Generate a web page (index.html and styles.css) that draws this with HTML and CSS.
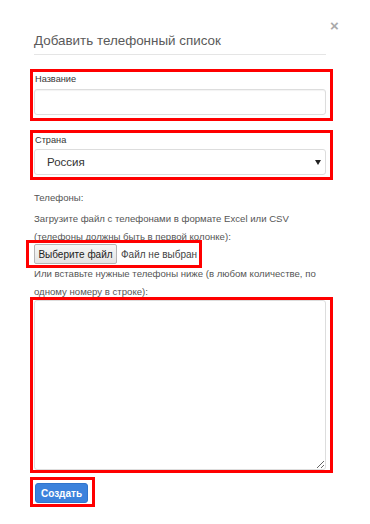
FILE: index.html
```html
<!DOCTYPE html>
<html lang="ru">
<head>
<meta charset="utf-8">
<title>Добавить телефонный список</title>
<link rel="stylesheet" href="styles.css">
</head>
<body>
<div class="modal">
  <button class="close" type="button">×</button>
  <div class="modal-header">
    <h4 class="title">Добавить телефонный список</h4>
  </div>
  <form class="modal-body">
    <div class="mark mark-wide">
      <label class="label">Название</label>
      <input class="control" type="text">
    </div>
    <div class="mark mark-wide mark-country">
      <label class="label">Страна</label>
      <div class="select">
        <span class="select-value">Россия</span>
        <svg class="select-arrow" width="6" height="5" viewBox="0 0 6 5"><path d="M0 0H6L3 5Z" fill="#222"/></svg>
      </div>
    </div>
    <p class="text text-phones">Телефоны:</p>
    <p class="text text-upload">Загрузите файл с телефонами в формате Excel или CSV (телефоны должны быть в первой колонке):</p>
    <div class="mark mark-file">
      <span class="file-btn">Выберите файл</span>
      <span class="file-name">Файл не выбран</span>
    </div>
    <p class="text text-paste">Или вставьте нужные телефоны ниже (в любом количестве, по одному номеру в строке):</p>
    <div class="mark mark-wide mark-area">
      <textarea class="area"></textarea>
    </div>
    <div class="mark mark-submit">
      <button class="submit" type="button">Создать</button>
    </div>
  </form>
</div>
</body>
</html>
```
FILE: styles.css
```css
* { box-sizing: border-box; }
html, body { margin: 0; padding: 0; background: #fff; }
body { font-family: "Liberation Sans", Arial, sans-serif; color: #555; }

.modal { position: relative; width: 370px; height: 524px; padding: 0 44px 0 34px; }

.close {
  position: absolute; left: 330px; top: 17px;
  border: 0; background: none; padding: 0; margin: 0;
  font-family: "Liberation Sans", Arial, sans-serif;
  font-size: 15px; font-weight: bold; line-height: 18px; color: #aaa;
}

.modal-header { padding-top: 32px; padding-bottom: 4px; border-bottom: 1px solid #e5e5e5; }
.title { margin: 0; font-size: 13.4px; font-weight: normal; line-height: 18px; color: #5a5a5a; }

.modal-body { margin: 0; display: flex; flex-direction: column; align-items: flex-start; }

.mark { border: 3px solid #f00; }
.mark-wide { margin-left: -4px; width: 303px; padding: 0 0 3px 1px; margin-top: 14px; }
.mark-country { margin-top: 9px; padding-bottom: 2px; }

.label { display: block; font-size: 9.2px; line-height: 14px; color: #333; padding-left: 1px; }

.control {
  display: block; width: 292px; height: 26px; margin: 3px 0 0 0;
  border: 1px solid #ddd; border-radius: 3px; background: #fff;
  box-shadow: inset 0 1px 1px rgba(0,0,0,0.05);
  font-family: inherit;
}

.select {
  position: relative; display: flex; align-items: center;
  width: 292px; height: 26px; margin-top: 2px; padding-left: 12px;
  border: 1px solid #ddd; border-radius: 3px; background: #fff;
  font-size: 11.5px; color: #333;
}
.select-arrow { position: absolute; right: 4px; top: 10px; }

.text { margin: 0; font-size: 9.6px; line-height: 18px; color: #555; width: 292px; }
.text-phones { margin-top: 9px; }
.text-upload { margin-top: 3px; }

.mark-file {
  margin: -6px 0 0 -8px; width: 176px; height: 28px;
  display: flex; align-items: center; padding-left: 5px;
}
.file-btn {
  display: inline-flex; align-items: center; justify-content: center;
  width: 83px; height: 20px;
  border: 1px solid #b5b5b5; border-radius: 2px;
  background: linear-gradient(#f6f6f6, #e4e4e4);
  font-size: 10px; color: #222;
}
.file-name { margin-left: 4px; font-size: 10px; color: #444; }

.text-paste { margin-top: -3px; }

.mark-area { margin-top: -4px; height: 176px; padding: 0 0 0 1px; }
.area {
  display: block; width: 292px; height: 170px; margin: 0; resize: vertical;
  border: 1px solid #ddd; border-radius: 3px; background: #fff;
  font-family: inherit;
}

.mark-submit { margin-top: 4px; margin-left: -4px; width: 65px; height: 30px; padding: 3px 0 0 2px; }
.submit {
  display: block; width: 53px; height: 20px; margin: 0; padding: 0;
  border: 1px solid #2f74cc; border-radius: 3px; background: #3c82dc;
  font-family: inherit; font-size: 10px; font-weight: bold; color: #fff;
}
```
